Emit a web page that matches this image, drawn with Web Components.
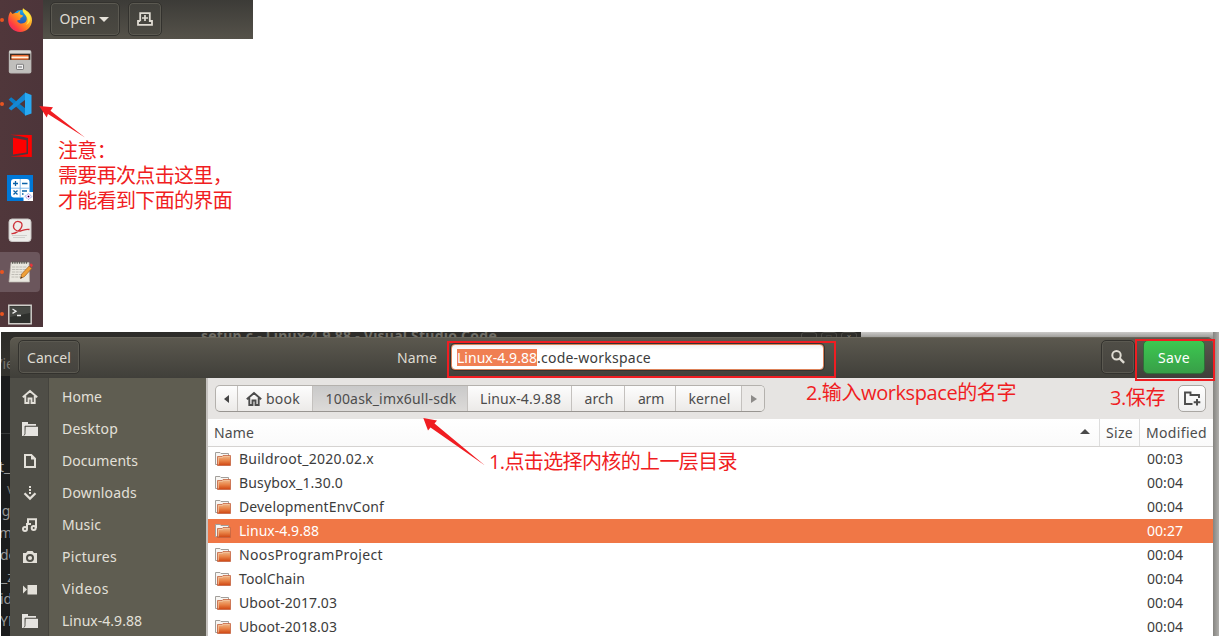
<!DOCTYPE html>
<html lang="en"><head><meta charset="utf-8"><title>Save workspace</title>
<style>
html,body{margin:0;width:1219px;height:636px;overflow:hidden;background:#fff}
</style></head><body><desktop-page></desktop-page>
<script>
const define=(name,html,hook)=>customElements.define(name,class extends HTMLElement{
  constructor(){super();this.attachShadow({mode:'open'});}
  connectedCallback(){this.shadowRoot.innerHTML=typeof html==='function'?html(this):html;if(hook)hook(this);}
});

/* Text fitted to a given advance width by letter spacing */
define('fit-text','<style>:host{display:inline-block;white-space:pre;flex:none}span{display:inline-block}</style><span><slot></slot></span>',el=>{
  const w=+el.getAttribute('w'),s=el.shadowRoot.querySelector('span');
  const nat=s.getBoundingClientRect().width,n=[...el.textContent].length;
  s.style.letterSpacing=((w-nat)/n)+'px';el.style.width=w+'px';
});

const folder='<path fill="#e6e4e0" d="M0 1h6v2h8v2H3v10H0z"/><path fill="#e6e4e0" d="M3.5 5.5H16V15H2.6z"/><path d="M3 5v8L1.9 14.6" fill="none" stroke="#4f4e47" stroke-width=".9"/><path d="M3 5.2h13" stroke="#4f4e47" stroke-width=".9"/>';
const glyphs={
home:'<path fill="none" stroke="currentColor" stroke-width="1.9" d="M.8 8.3 8 2l7.2 6.3M3.3 7v7h3.2V9.5h3V14h3.2V7"/>',
folder,
doc:'<path fill="none" stroke="currentColor" stroke-width="2" d="M3 2h6.3L13 5.7V14H3z"/><path fill="currentColor" d="M9 2v4.5h4.5z"/>',
down:'<path d="M8 1v9" stroke="currentColor" stroke-width="2" stroke-dasharray="2 1" fill="none"/><path d="m2.5 8.2 5.5 5.4 5.5-5.4" fill="none" stroke="currentColor" stroke-width="2.2"/>',
music:'<g fill="none" stroke="currentColor" stroke-width="2"><circle cx="3" cy="12" r="2"/><circle cx="11.7" cy="11" r="2"/><path d="M5 12V7h4M6 6.5V2.3h8V11"/></g>',
camera:'<path fill="currentColor" fill-rule="evenodd" d="M1 4h3l1.5-2h5L12 4h3v10H1zm7 1a4 4 0 1 0 0 8 4 4 0 0 0 0-8z"/><circle cx="8" cy="9" r="2.1" fill="currentColor"/>',
video:'<path fill="currentColor" d="M5.5 4H15v9.5H5.5zM1 4.5l4 4-4 4z"/>',
search:'<circle cx="6.5" cy="6.3" r="4.2" fill="none" stroke="currentColor" stroke-width="2"/><path d="m9.6 9.4 4.5 4.4" stroke="currentColor" stroke-width="2.4"/>',
newtab:'<path fill="none" stroke="currentColor" stroke-width="1.8" d="M3.2 10V2.100h9.600V10H15v3.900H1V10h2.200"/><path stroke="currentColor" stroke-width="1.700" d="M8 4v6M5 7h6"/>',
newfolder:'<path fill="none" stroke="currentColor" stroke-width="1.9" d="M8.500 13H1V1.500h5.500V4H15v3"/><path stroke="currentColor" stroke-width="2" d="M13 8v6.500M9.700 11.200h6.600"/>',
file:'<defs><linearGradient id="g" x2="0" y2="1"><stop stop-color="#efbd91"/><stop offset=".5" stop-color="#e98549"/><stop offset="1" stop-color="#cf4511"/></linearGradient></defs><path d="M.5 13.500V1.500h4.500l1 1h7.500v11z" fill="#f7f5f2" stroke="#a29f9b"/><path d="M2.500 14.500V5.500H7l1-1h7.500v10z" fill="url(#g)" stroke="#c46543" stroke-width=".8"/><path d="M3.500 13.500V6.500h4l1-1h6" fill="none" stroke="#f5c6a0" stroke-width=".7"/>',
firefox:`<defs><linearGradient id="a" x1="1" y1="0" x2="0" y2="1"><stop offset=".15" stop-color="#ffdf3a"/><stop offset=".5" stop-color="#ff8a1e"/><stop offset=".75" stop-color="#ff3b43"/><stop offset="1" stop-color="#d61a8a"/></linearGradient><linearGradient id="b" x2="0" y2="1"><stop stop-color="#1ba7ee"/><stop offset="1" stop-color="#2b3f9e"/></linearGradient></defs>
<circle cx="13" cy="10.500" r="8.500" fill="url(#b)"/><path fill="url(#a)" d="M2.500 3.500 4.500 6C6 5 8 4.800 9.500 5c1-1.200 2-2 3-2.300-.8 1.300-.9 2.500-.4 3.600.5.800 1.800.9 3 1.100-.2 1.300-1.500 1.800-2.600 2.500-.4.800-.5 1.400-.2 2.100-1.300-.2-2.500-.2-3.300.7 1.500 2.800 5 3.600 7.500 2 2.500-1.500 2.800-4.500 1.500-7C16 5.500 13.800 3.500 15 .3c1.500 1.500 4 2.500 5.800 4.200C22.800 6.500 24 9.300 24 12.200 24 18.500 18.800 24 12.200 24 5.500 24 .2 18.600.2 12.200.2 9 .8 6 2.500 3.500z"/><path fill="#fff04a" opacity=".8" d="M15 .5c-.7 3 1.500 5 3.500 8s1.500 6-.5 8.500c3.500-1.500 5.300-5.500 4-9C21 4.500 17 3 15 .5z"/>`,
files:'<rect x=".8" y="0" width="22.600" height="23.500" rx="2" fill="#b9b8b5"/><path fill="#d9d8d5" d="M1.500 1h21v2h-21z"/><path fill="#3a2c25" d="M2 3.800h20.200v6H2z"/><path fill="#e9692c" d="M3.500 5h17v4.600h-17z"/><path fill="#fff0dc" d="M3.500 6.500h17v1.800h-17z"/><path fill="#c0bfbc" d="M1.500 10.200h21V22.500h-21z"/><rect x="8.500" y="14.300" width="7" height="5.200" rx=".6" fill="#eee" stroke="#808080"/><path stroke="#666" d="M10 17h4"/>',
vscode:'<path fill="#0a7cc6" d="m.6 7.500 2.600-2.300L17.500 16.500V23.500z"/><path fill="#1587d3" d="M.6 16.300 17.500.5v7L3.200 18.600z"/><path fill="#29a9f2" d="M17 .5 23.500 3v18.500L17 23.700z"/>',
red:'<path d="M1 .8 22.800 1v22L1 22.500l9-1L19 20V4L10 2z" fill="#f00"/><path d="M4 3.800 17.500 6.200v12.200L4 20.500z" fill="#f00"/>',
calc:'<path fill="#0078d7" d="M-1-1h26v26H-1z"/><rect x="3" y="3" width="18.500" height="18.500" rx="3" fill="#fff"/><path d="M12.200 3v18.500M3 12.200h18.500" stroke="#7bb6e8" stroke-width=".9"/><path d="M5 7.500h5M7.500 5v5M14 7.500h5.500M5.500 14.500l4 4m0-4-4 4M14 15h5M14 18h5" stroke="#0a62a8" stroke-width="1.300"/><path fill="#fff" d="M15.500 16H25v9h-9.500z"/><path d="m16.800 20.500 3.700-3 3.700 3-3.700 3z" fill="#fbeaff" stroke="#83a6e9" stroke-dasharray="1.500 .8"/><path d="m19.500 20.500 1-1 1 1-1 1z" stroke="#dd7ad4"/>',
reader:'<rect x="1" y="1" width="22" height="22.500" rx="3" fill="#edecea" stroke="#c8c5c3"/><path fill="none" stroke="#ce3038" stroke-width="1.300" d="M3.500 15.500c4 .5 10-3.500 10.500-8C14.300 3 8 2 6 6c-2 4.500 2 7.500 6.500 7 3-.5 5-2.500 9-1.500"/><path stroke="#d0cfcd" d="M4 17.500h15M5 19.500h12"/>',
editor:'<path fill="#e9e7df" stroke="#bbb8b0" stroke-width=".7" d="m3 2.500 18 0 .5 19.500H1z"/><path d="M4 2.500h16" stroke="#5d5c56" stroke-width="2.500" stroke-dasharray="1.300 1"/><path stroke="#bab8b1" stroke-width=".9" stroke-dasharray="3 .7" d="M4 7h15M4 9.500h14M4 12h13M3.500 14.500h11M3.500 17h9"/><path d="m12.500 18.500 1.200-4.500 7.500-8 2.500 2.500-7.200 8z" fill="#efa037" stroke="#9e5b1d" stroke-width=".7"/><path fill="#e6353c" d="m21.500 5 1.500-1.800L25 5l-1.300 2.500z"/><path fill="#41372c" d="m12.500 18.500.5-2 1.500 1.300z"/>',
term:'<path fill="#2e302d" stroke="#cfcdc9" stroke-width="1.500" d="M.8 3.200h22.400v18.500H.8z"/><path fill="#454743" d="M2 4.500h20V11L2 15z"/><path fill="none" stroke="#eee" stroke-width="1.300" d="m4.500 7 3.500 2.200-3.500 2.200M9 13.500h4"/>'
};
define('glyph-icon',el=>`<style>:host{display:inline-flex;flex:none}svg{overflow:visible;display:block}</style><svg width="${el.getAttribute('s')||16}" height="${el.getAttribute('s')||16}" viewBox="0 0 ${el.getAttribute('v')||16} ${el.getAttribute('v')||16}">${glyphs[el.getAttribute('n')]}</svg>`);

define('launch-item',el=>`<style>:host{display:flex;position:relative;width:40px;height:40px;flex:none;align-items:center;justify-content:center;border-radius:0 4px 4px 0}
:host([active]){background:#6b565c}:host([run])::before{content:"";position:absolute;left:0;top:18px;width:4px;height:4px;border-radius:50%;background:#e95420}:host([n=red]) glyph-icon{margin-left:1px}</style><glyph-icon n="${el.getAttribute('n')}" s="24" v="24"></glyph-icon>`);
define('app-launcher',`<style>:host{display:flex;flex-direction:column;gap:2px;width:43px;height:327px;overflow:hidden;background:linear-gradient(90deg,#50373b,#4d353a)}</style>
<launch-item n="firefox" run></launch-item><launch-item n="files"></launch-item><launch-item n="vscode" run></launch-item><launch-item n="red"></launch-item><launch-item n="calc"></launch-item><launch-item n="reader"></launch-item><launch-item n="editor" active run></launch-item><launch-item n="term" run></launch-item>`);

define('dark-button',`<style>:host{display:flex;box-sizing:border-box;height:34px;flex:none;align-items:center;justify-content:center;border:1px solid #33322e;border-radius:5px;background:linear-gradient(#504e47,#45433e);box-shadow:inset 0 0 0 1px #5b5951;color:#dfdbd2}
:host([save]){background:linear-gradient(#3cc850,#389f48);box-shadow:none;border-color:#2f6e39;color:#fff}</style><slot></slot>`);
define('editor-bar',`<style>:host{display:flex;box-sizing:border-box;width:210px;height:39px;padding:2px 7px;gap:8px;background:linear-gradient(#3c3b37,#55524a)}
dark-button{background:linear-gradient(#42413c,#4b4942)}.o{width:70px}.n{width:34px}i{border:5px solid transparent;border-top-color:#e6e2da;border-bottom:0;margin:0 2px 0 3px}</style>
<dark-button class="o"><fit-text w="36">Open</fit-text><i></i></dark-button><dark-button class="n"><glyph-icon n="newtab"></glyph-icon></dark-button>`);

define('name-entry',`<style>:host{display:flex;box-sizing:border-box;width:373px;height:26px;align-items:center;padding-left:5px;border:1px solid #dd8259;border-radius:4px;background:linear-gradient(#f1f1f0,#fff 5px);color:#3c3c3c;box-shadow:0 0 0 1px #35332f}
fit-text{height:17px;line-height:18px}.sel{background:#f07f53;color:#fff}</style><fit-text class="sel" w="80">Linux-4.9.88</fit-text><fit-text w="114">.code-workspace</fit-text>`);
define('dialog-header',`<style>:host{display:flex;box-sizing:border-box;height:41px;padding:3px 8px 4px 8px;border-radius:6px 6px 0 0;background:linear-gradient(#5c594f,#403f3a);color:#dfdbd2;box-shadow:inset 0 1px #69665b}
fit-text{padding-top:2px}.c{width:62px}.name{margin:0 14px 0 auto;align-self:center}name-entry{align-self:center}.s{width:34px;margin-left:277px}.save{width:62px;margin-left:8px}</style>
<dark-button class="c"><fit-text w="44">Cancel</fit-text></dark-button><fit-text class="name" w="40">Name</fit-text><name-entry></name-entry><dark-button class="s"><glyph-icon n="search"></glyph-icon></dark-button><dark-button class="save" save><fit-text w="32">Save</fit-text></dark-button>`);

const places=[['home','Home',40],['folder','Desktop',56],['doc','Documents',76],['down','Downloads',75],['music','Music',39],['camera','Pictures',55],['video','Videos',47],['folder','Linux-4.9.88',80]];
define('places-sidebar',`<style>:host{display:flex;flex-direction:column;box-sizing:border-box;width:198px;padding-top:3px;border-right:2px solid #c5c2bf;background:linear-gradient(90deg,#4f4e47 38px,#45443e 38px,#45443e 39px,#5f5d51 39px);color:#e3e0d9}
div{display:flex;height:32px;align-items:center;flex:none}glyph-icon{margin:0 24px 0 12px}</style>`+places.map(p=>`<div><glyph-icon n="${p[0]}"></glyph-icon><fit-text w="${p[2]}">${p[1]}</fit-text></div>`).join(''));

define('path-bar',`<style>:host{display:flex;box-sizing:border-box;height:41px;align-items:center;padding:0 8px 0 7px;background:#e6e4e2;color:#4c4c4c}
.bar{display:flex;box-sizing:border-box;height:27px;width:550px;border:1px solid #b4b1ad;border-bottom-color:#989591;border-radius:5px;overflow:hidden;background:linear-gradient(#fdfdfd,#eceae8)}
.bar>div{display:flex;box-sizing:border-box;align-items:center;justify-content:center;padding-left:2px;border-right:1px solid #c4c1be;flex:none}.bar>div:first-child{padding:0}.bar>div:last-child{border:0;background:#ebe9e7;flex:1}
.on{background:linear-gradient(#c9c9c9,#dcdad8)}.l,.r{border:4.500px solid transparent;border-right:5px solid #444;border-left:0}.r{border-right:0;border-left:6px solid #8d8b89}
.new{display:flex;align-items:center;justify-content:center;box-sizing:border-box;width:28px;height:27px;border:1px solid #aaa7a3;border-radius:5px;background:linear-gradient(#fff,#eee);margin-left:auto;margin-right:-1px}.bar>.h{gap:4px;justify-content:flex-start;padding-left:8px}</style>
<div class="bar"><div style="width:22px"><i class="l"></i></div><div class="h" style="width:75px"><glyph-icon n="home"></glyph-icon><fit-text w="34">book</fit-text></div><div class="on" style="width:155px"><fit-text w="131">100ask_imx6ull-sdk</fit-text></div><div style="width:104px"><fit-text w="81">Linux-4.9.88</fit-text></div><div style="width:53px"><fit-text w="29">arch</fit-text></div><div style="width:51px"><fit-text w="26">arm</fit-text></div><div style="width:66px"><fit-text w="42">kernel</fit-text></div><div><i class="r"></i></div></div>
<div class="new"><glyph-icon n="newfolder"></glyph-icon></div>`);

define('file-row',`<style>:host{display:flex;height:24px;align-items:center;padding:0 30px 0 7px;color:#3c3c3c;flex:none}:host([selected]){background:#f07746;color:#fff}glyph-icon{margin-right:8px}.t{display:block;margin-left:auto}</style><glyph-icon n="file"></glyph-icon><slot></slot><slot name="time" class="t"></slot>`);
const files=[['Buildroot_2020.02.x',135,'00:03'],['Busybox_1.30.0',104,'00:04'],['DevelopmentEnvConf',145,'00:04'],['Linux-4.9.88',80,'00:27'],['NoosProgramProject',144,'00:04'],['ToolChain',66,'00:04'],['Uboot-2017.03',98,'00:04'],['Uboot-2018.03',98,'00:04']];
define('file-list',`<style>:host{display:flex;flex-direction:column;background:#fff;flex:1;min-height:0}
header{display:flex;height:27px;border-bottom:1px solid #d5d3d1;background:linear-gradient(#fff,#fafafa);color:#4c4c4c;align-items:center;flex:none}
header>div{display:flex;align-items:center;box-sizing:border-box;height:100%;padding-left:6px}.n{flex:1}.s{width:40px;border-left:1px solid #ddd}.m{width:74px;border-left:1px solid #ddd}i{border:5px solid transparent;border-bottom-color:#4a4a4a;border-top:0;margin:0 9px 2px auto}</style>
<header><div class="n"><fit-text w="40">Name</fit-text><i></i></div><div class="s"><fit-text w="27">Size</fit-text></div><div class="m"><fit-text w="61">Modified</fit-text></div></header>`+files.map((f,i)=>`<file-row ${i==3?'selected':''}><fit-text w="${f[1]}">${f[0]}</fit-text><fit-text slot="time" w="36">${f[2]}</fit-text></file-row>`).join(''));

define('save-dialog',`<style>:host{display:flex;flex-direction:column;width:1203px;height:299px;overflow:hidden}.b{display:flex;flex:1;min-height:0}.m{display:flex;flex-direction:column;flex:1}</style>
<dialog-header></dialog-header><div class="b"><places-sidebar></places-sidebar><div class="m"><path-bar></path-bar><file-list></file-list></div></div>`);

const frags=[['Vie',364,-7,'#77756d'],['t_',467,-2,'#999'],['v',489,6,'#777'],['ng',511,-8,'#999'],['m',533,-2,'#999'],['de',555,-1,'#999'],['_z',577,0,'#999'],['id',599,-1,'#999'],['YM',621,-1,'#999']];
define('code-window',`<style>:host{display:block;position:absolute;left:0;top:0;width:860px;height:304px;overflow:hidden;background:linear-gradient(#2d2c29 0,#34332f 44px,#1b1c1d 44px);color:#6f6d66}
.t{position:absolute;left:200px;top:-6px;font-weight:bold;line-height:20px;font-size:14px}.e{position:absolute;left:0;top:0;width:9px;height:304px;overflow:hidden;background:linear-gradient(transparent 101px,#393a3b 101px,#393a3b 102px,transparent 102px)}.e span{position:absolute;line-height:20px;font-size:14px}
.w{position:absolute;right:4px;top:0;display:flex;gap:4px}.w b{width:14px;height:10px;border:1px solid #4b4a45;font-size:8px;line-height:8px;text-align:center;border-radius:3px}</style>
<fit-text class="t" w="296">setup.c - Linux-4.9.88 - Visual Studio Code</fit-text><div class="w"><b>–</b><b>□</b><b>×</b></div><div class="e">${frags.map(f=>`<span style="left:${f[2]}px;top:${f[1]-342}px;color:${f[3]}">${f[0]}</span>`).join('')}</div>`);
define('lower-scene',`<style>:host{display:block;position:relative;box-sizing:border-box;width:1218px;height:304px;margin-left:1px;padding:5px 0 0 9px;background:linear-gradient(90deg,transparent 1212px,#858480 1212px,#b0afac 1218px),linear-gradient(#cbcac8,#989793 6px)}save-dialog{position:relative}</style><code-window></code-window><save-dialog></save-dialog>`);

define('red-note',`<style>:host{position:absolute;font:20px/25px "Open Sans","Noto Sans CJK SC",sans-serif;color:#f01d22;white-space:nowrap}</style><slot></slot>`);
define('red-box',`<style>:host{position:absolute;box-sizing:border-box;border:2px solid #f01d22}</style>`);
define('red-arrows',`<style>:host{position:absolute;left:0;top:0;pointer-events:none}svg{display:block}</style><svg width="1219" height="636" fill="#f01d22"><path d="M39.300 106 53 107.300 50.500 110.700 85 137.500 48 114 46.700 117.500z"/><path d="M423.300 418 437 420.500 434.500 423.500 485 465.500 430.500 427.500 428 430.500z"/></svg>`);
define('desktop-page',`<style>:host{display:flex;flex-direction:column;gap:5px;position:relative;width:1219px;height:636px;overflow:hidden;font:14px/20px "Noto Sans",sans-serif}.top{display:flex;align-items:flex-start;height:327px}
.a div{height:25px}</style>
<div class="top"><app-launcher></app-launcher><editor-bar></editor-bar></div><lower-scene></lower-scene>
<red-arrows></red-arrows>
<red-box style="left:447px;top:341px;width:389px;height:37px"></red-box><red-box style="left:1135px;top:339px;width:80px;height:42px"></red-box>
<red-note class="a" style="left:58px;top:138px"><div><fit-text w="58">注意：</fit-text></div><div><fit-text w="174">需要再次点击这里，</fit-text></div><div><fit-text w="174">才能看到下面的界面</fit-text></div></red-note>
<red-note style="left:489px;top:449px"><fit-text w="248">1.点击选择内核的上一层目录</fit-text></red-note>
<red-note style="left:806px;top:380px"><fit-text w="210">2.输入workspace的名字</fit-text></red-note>
<red-note style="left:1110px;top:385px"><fit-text w="55">3.保存</fit-text></red-note>`);
</script></body></html>
